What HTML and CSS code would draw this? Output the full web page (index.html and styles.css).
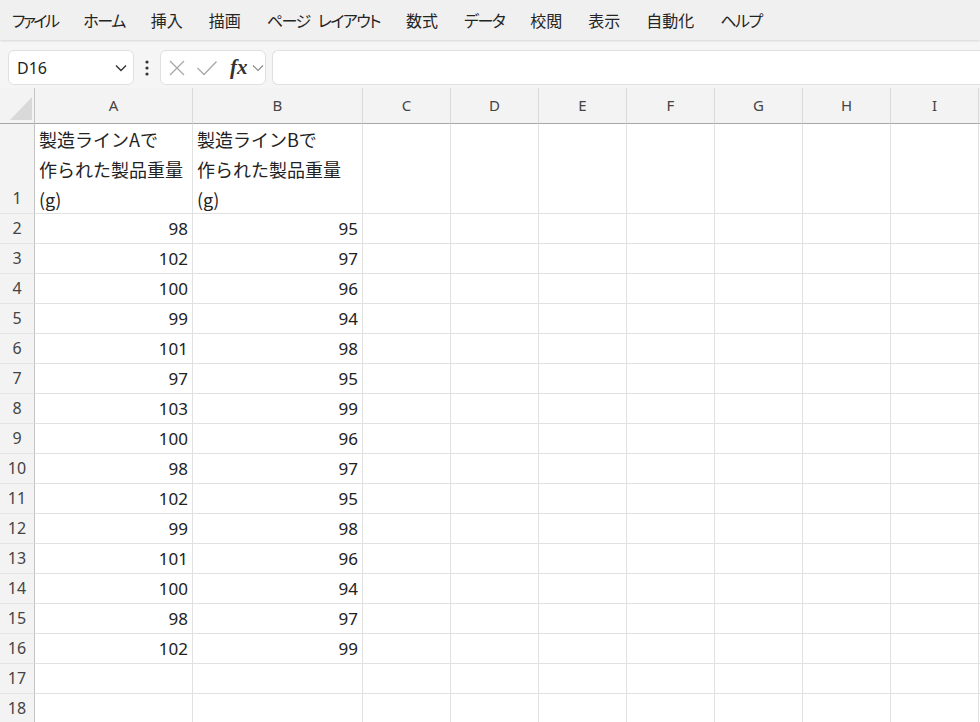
FILE: index.html
```html
<!DOCTYPE html>
<html lang="ja">
<head>
    <meta charset="UTF-8">
    <title>Book1 - Excel</title>
    <link rel="stylesheet" href="styles.css">
</head>
<body>
    <nav class="menu">
        <span class="kana tight">ファイル</span>
        <span class="kana">ホーム</span>
        <span>挿入</span>
        <span>描画</span>
        <span class="kana">ページ レイアウト</span>
        <span>数式</span>
        <span class="kana">データ</span>
        <span>校閲</span>
        <span>表示</span>
        <span>自動化</span>
        <span class="kana">ヘルプ</span>
    </nav>

    <div class="formula-bar">
        <div class="name-box">
            <span>D16</span>
            <svg width="12" height="8" viewBox="0 0 12 8"><path d="M1 1.5 L6 6.5 L11 1.5" fill="none" stroke="#333" stroke-width="1.4"/></svg>
        </div>
        <div class="more-dots">
            <svg width="4" height="16" viewBox="0 0 4 16"><circle cx="2" cy="2" r="1.6" fill="#333"/><circle cx="2" cy="8" r="1.6" fill="#333"/><circle cx="2" cy="14" r="1.6" fill="#333"/></svg>
        </div>
        <div class="fx-box">
            <svg width="18" height="18" viewBox="0 0 18 18"><path d="M2 2 L16 16 M16 2 L2 16" stroke="#a8a8a8" stroke-width="1.3"/></svg>
            <svg width="22" height="18" viewBox="0 0 22 18"><path d="M1.5 9 L8 15.5 L20.5 2.5" fill="none" stroke="#a8a8a8" stroke-width="1.3"/></svg>
            <span class="fx">fx</span>
            <svg width="12" height="8" viewBox="0 0 12 8"><path d="M1 1.5 L6 6.5 L11 1.5" fill="none" stroke="#888" stroke-width="1.1"/></svg>
        </div>
        <div class="formula-input"></div>
    </div>

    <div class="sheet">
        <div class="row col-head">
            <div class="corner"><div class="triangle"></div></div>
            <div>A</div><div>B</div><div>C</div><div>D</div><div>E</div><div>F</div><div>G</div><div>H</div><div>I</div><div></div>
        </div>
        <div class="row tall">
            <div class="rh">1</div>
            <div class="txt">製造ラインAで<br>作られた製品重量<br>(g)</div>
            <div class="txt">製造ラインBで<br>作られた製品重量<br>(g)</div>
            <div></div><div></div><div></div><div></div><div></div><div></div><div></div><div></div>
        </div>
        <div class="row"><div class="rh">2</div><div class="num">98</div><div class="num">95</div><div></div><div></div><div></div><div></div><div></div><div></div><div></div><div></div></div>
        <div class="row"><div class="rh">3</div><div class="num">102</div><div class="num">97</div><div></div><div></div><div></div><div></div><div></div><div></div><div></div><div></div></div>
        <div class="row"><div class="rh">4</div><div class="num">100</div><div class="num">96</div><div></div><div></div><div></div><div></div><div></div><div></div><div></div><div></div></div>
        <div class="row"><div class="rh">5</div><div class="num">99</div><div class="num">94</div><div></div><div></div><div></div><div></div><div></div><div></div><div></div><div></div></div>
        <div class="row"><div class="rh">6</div><div class="num">101</div><div class="num">98</div><div></div><div></div><div></div><div></div><div></div><div></div><div></div><div></div></div>
        <div class="row"><div class="rh">7</div><div class="num">97</div><div class="num">95</div><div></div><div></div><div></div><div></div><div></div><div></div><div></div><div></div></div>
        <div class="row"><div class="rh">8</div><div class="num">103</div><div class="num">99</div><div></div><div></div><div></div><div></div><div></div><div></div><div></div><div></div></div>
        <div class="row"><div class="rh">9</div><div class="num">100</div><div class="num">96</div><div></div><div></div><div></div><div></div><div></div><div></div><div></div><div></div></div>
        <div class="row"><div class="rh">10</div><div class="num">98</div><div class="num">97</div><div></div><div></div><div></div><div></div><div></div><div></div><div></div><div></div></div>
        <div class="row"><div class="rh">11</div><div class="num">102</div><div class="num">95</div><div></div><div></div><div></div><div></div><div></div><div></div><div></div><div></div></div>
        <div class="row"><div class="rh">12</div><div class="num">99</div><div class="num">98</div><div></div><div></div><div></div><div></div><div></div><div></div><div></div><div></div></div>
        <div class="row"><div class="rh">13</div><div class="num">101</div><div class="num">96</div><div></div><div></div><div></div><div></div><div></div><div></div><div></div><div></div></div>
        <div class="row"><div class="rh">14</div><div class="num">100</div><div class="num">94</div><div></div><div></div><div></div><div></div><div></div><div></div><div></div><div></div></div>
        <div class="row"><div class="rh">15</div><div class="num">98</div><div class="num">97</div><div></div><div></div><div></div><div></div><div></div><div></div><div></div><div></div></div>
        <div class="row"><div class="rh">16</div><div class="num">102</div><div class="num">99</div><div></div><div></div><div></div><div></div><div></div><div></div><div></div><div></div></div>
        <div class="row"><div class="rh">17</div><div></div><div></div><div></div><div></div><div></div><div></div><div></div><div></div><div></div><div></div></div>
        <div class="row"><div class="rh">18</div><div></div><div></div><div></div><div></div><div></div><div></div><div></div><div></div><div></div><div></div></div>
    </div>
</body>
</html>
```

FILE: styles.css
```css
body {
    margin: 0;
    width: 980px;
    height: 722px;
    overflow: hidden;
    background-color: #ffffff;
    font-family: "Noto Sans", "Noto Sans CJK JP", sans-serif;
    color: #222;
}
.menu {
    display: flex;
    gap: 26px;
    height: 40px;
    align-items: center;
    padding-left: 12px;
    background-color: #f0f0f0;
    font-family: "Noto Sans CJK JP", sans-serif;
    font-feature-settings: "palt";
    font-size: 16px;
    color: #242424;
    box-shadow: 0 1px 2px rgba(0, 0, 0, 0.12);
    position: relative;
    z-index: 1;
}
.menu .kana {
    letter-spacing: -1.5px;
    word-spacing: 6px;
}
.menu .tight {
    letter-spacing: -2.5px;
}
.formula-bar {
    display: flex;
    align-items: flex-start;
    height: 48px;
    box-sizing: border-box;
    padding: 10px 0 0 8px;
    background-color: #f5f5f5;
}
.name-box,
.fx-box,
.formula-input {
    height: 35px;
    box-sizing: border-box;
    background-color: #fff;
    border: 1px solid #e0e0e0;
    border-radius: 6px;
    display: flex;
    align-items: center;
}
.name-box {
    width: 126px;
    padding: 0 6px 0 8px;
    justify-content: space-between;
    font-size: 16px;
    color: #242424;
}
.more-dots {
    width: 26px;
    height: 35px;
    display: flex;
    align-items: center;
    justify-content: center;
}
.fx-box {
    width: 106px;
    padding-left: 7px;
    gap: 10px;
}
.fx-box .fx {
    font-family: "Liberation Serif", serif;
    font-style: italic;
    font-weight: bold;
    font-size: 21px;
    color: #333;
    margin-left: 2px;
    margin-right: -6px;
}
.formula-input {
    flex: 1;
    margin-left: 6px;
    border-right: none;
    border-radius: 6px 0 0 6px;
}
.row {
    display: grid;
    grid-template-columns: 35px 158px 170px repeat(7, 88px) 1fr;
    height: 30px;
}
.row > div {
    box-sizing: border-box;
    border-right: 1px solid #e1e1e1;
    border-bottom: 1px solid #e1e1e1;
    padding: 0 4px;
    line-height: 30px;
    font-size: 17px;
    white-space: nowrap;
    overflow: hidden;
}
.row.tall {
    height: 90px;
}
.col-head {
    height: 36px;
    background-color: #f3f3f3;
}
.col-head > div {
    text-align: center;
    font-size: 15px;
    line-height: 35px;
    color: #444;
    border-right-color: #dadada;
    border-bottom-color: #a8a8a8;
}
.col-head .corner {
    border-right-color: #c4c4c4;
    position: relative;
}
.triangle {
    position: absolute;
    right: 2px;
    bottom: 3px;
    width: 0;
    height: 0;
    border-left: 22px solid transparent;
    border-bottom: 23px solid #d9d9d9;
}
.row .rh {
    background-color: #f3f3f3;
    border-right-color: #c4c4c4;
    border-bottom-color: #e4e4e4;
    color: #444;
    font-size: 16px;
    text-align: center;
    display: flex;
    align-items: flex-end;
    justify-content: center;
    padding: 0;
}
.txt {
    font-family: "Noto Sans CJK JP", sans-serif;
    color: #222;
}
.row .txt {
    font-size: 18px;
}
.num {
    text-align: right;
}
```
